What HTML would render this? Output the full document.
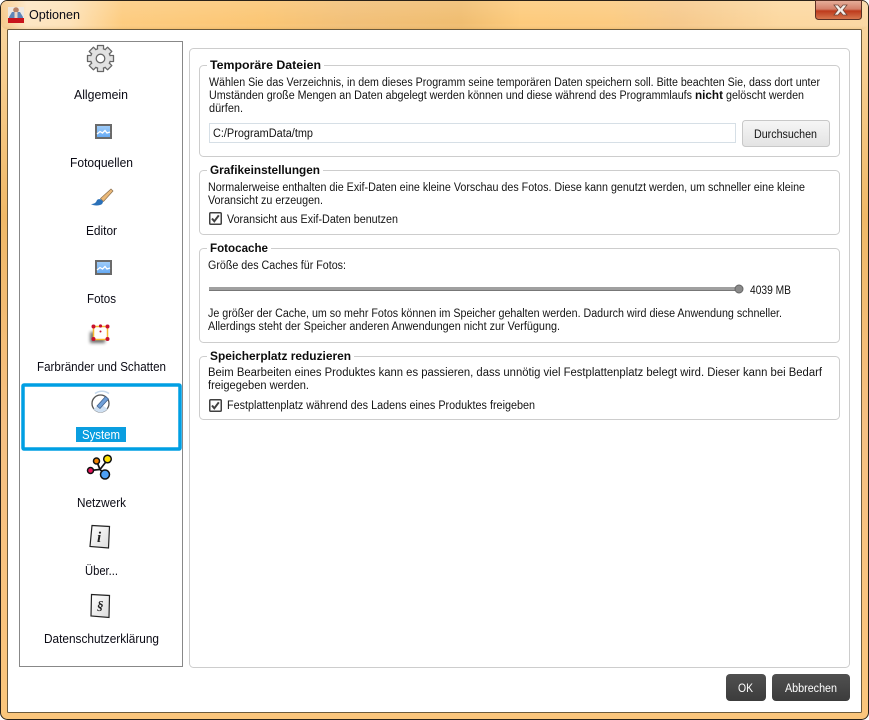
<!DOCTYPE html>
<html lang="de"><head><meta charset="utf-8"><title>Optionen</title>
<style>
html,body{margin:0;padding:0;width:869px;height:720px;overflow:hidden;background:#fff}
svg{display:block;position:absolute;left:0;top:0}
text{font-family:"Liberation Sans",sans-serif;font-size:11.500px;fill:#141414}
.l{font-size:12.500px;fill:#0a0a14}
.b{font-weight:bold;fill:#0c0c0c;font-size:11.500px}
</style></head><body>
<svg width="869" height="720" viewBox="0 0 869 720" xmlns="http://www.w3.org/2000/svg">
<defs>
<linearGradient id="tb" x1="0" x2="1" y1="0" y2="0">
<stop offset="0" stop-color="#f6c98a"/><stop offset=".03" stop-color="#fde6c4"/><stop offset=".08" stop-color="#fde2b8"/><stop offset=".14" stop-color="#fdcc80"/><stop offset=".3" stop-color="#fbc674"/><stop offset=".4" stop-color="#f2c078"/><stop offset=".53" stop-color="#f0bd70"/><stop offset=".6" stop-color="#fdcb7c"/><stop offset=".7" stop-color="#fccb80"/><stop offset=".78" stop-color="#f6c98c"/><stop offset=".9" stop-color="#fcd8a0"/><stop offset="1" stop-color="#fbd8a4"/>
</linearGradient>
<linearGradient id="tv" x1="0" x2="0" y1="0" y2="1"><stop offset="0" stop-color="#fff" stop-opacity=".12"/><stop offset=".8" stop-color="#fff" stop-opacity="0"/><stop offset="1" stop-color="#c98a30" stop-opacity=".18"/></linearGradient>
<linearGradient id="side" x1="0" x2="0" y1="0" y2="1"><stop offset="0" stop-color="#fbd9a4"/><stop offset=".3" stop-color="#f0b968"/><stop offset=".6" stop-color="#f6c183"/><stop offset="1" stop-color="#fbc67c"/></linearGradient>
<linearGradient id="close" x1="0" x2="0" y1="0" y2="1"><stop offset="0" stop-color="#e6b09c"/><stop offset=".45" stop-color="#d4806a"/><stop offset=".55" stop-color="#bd3a1c"/><stop offset="1" stop-color="#d87a50"/></linearGradient>
<linearGradient id="btn" x1="0" x2="0" y1="0" y2="1"><stop offset="0" stop-color="#f6f6f6"/><stop offset="1" stop-color="#e3e3e3"/></linearGradient>
<linearGradient id="dark" x1="0" x2="0" y1="0" y2="1"><stop offset="0" stop-color="#505050"/><stop offset="1" stop-color="#3c3c3c"/></linearGradient>
<linearGradient id="pic" x1="0" x2="0" y1="0" y2="1"><stop offset="0" stop-color="#a4cef8"/><stop offset="1" stop-color="#62a8f4"/></linearGradient>
<linearGradient id="page" x1="0" x2="1" y1="0" y2="1"><stop offset="0" stop-color="#fff"/><stop offset="1" stop-color="#dcdcdc"/></linearGradient>
<filter id="sh" x="-50%" y="-50%" width="200%" height="200%"><feGaussianBlur stdDeviation="1.600"/></filter>
</defs>

<!-- window frame -->
<rect x=".5" y=".5" width="868" height="719" rx="7" fill="url(#side)" stroke="#2a2218"/>
<rect x="1" y="1" width="867" height="28" rx="6" fill="url(#tb)"/>
<rect x="1" y="1" width="867" height="28" rx="6" fill="url(#tv)"/>
<rect x="7.500" y="29.500" width="854" height="683" rx="1" fill="#fff" stroke="#6b5a3c"/>

<!-- title icon -->
<rect x="8" y="7" width="16" height="16" fill="#eee8e2"/>
<path d="M9 17l3-5h8l3 5v1H9z" fill="#5f86b8"/>
<circle cx="16" cy="10" r="2.800" fill="#b88064"/>
<rect x="14.500" y="12" width="3" height="6" fill="#e8d4c4"/>
<rect x="8" y="18" width="16" height="5" fill="#c8141c"/>
<text x="29" y="19" class="l" textLength="51" lengthAdjust="spacingAndGlyphs">Optionen</text>

<!-- close button -->
<path d="M815.500 0.500h46v16a3 3 0 0 1-3 3h-40a3 3 0 0 1-3-3z" fill="url(#close)" stroke="#5a3024"/>
<path d="M834 5h4l2.500 3 2.500-3h4l-4 5 4 5h-4l-2.500-3-2.500 3h-4l4-5z" fill="#f4f0ec" stroke="#70473a" stroke-width=".8"/>

<!-- left panel -->
<rect x="19.500" y="41.500" width="163" height="625" fill="#fff" stroke="#888"/>
<rect x="23" y="385" width="157" height="64" rx="1" fill="#fff" stroke="#009fe3" stroke-width="3.500"/>
<rect x="76" y="427" width="50" height="15" fill="#0a9ee0"/>

<!-- gear -->
<g transform="translate(100.500 58.500)">
<g fill="#e2e2e2" stroke="#666" stroke-width="1.300" stroke-linejoin="round">
<rect x="-3" y="-13" width="6" height="6"/>
<rect x="-3" y="-13" width="6" height="6" transform="rotate(45)"/>
<rect x="-3" y="-13" width="6" height="6" transform="rotate(90)"/>
<rect x="-3" y="-13" width="6" height="6" transform="rotate(135)"/>
<rect x="-3" y="-13" width="6" height="6" transform="rotate(180)"/>
<rect x="-3" y="-13" width="6" height="6" transform="rotate(225)"/>
<rect x="-3" y="-13" width="6" height="6" transform="rotate(270)"/>
<rect x="-3" y="-13" width="6" height="6" transform="rotate(315)"/>
<circle r="10"/>
</g>
<g fill="#e2e2e2">
<rect x="-2.300" y="-12" width="4.600" height="5"/>
<rect x="-2.300" y="-12" width="4.600" height="5" transform="rotate(45)"/>
<rect x="-2.300" y="-12" width="4.600" height="5" transform="rotate(90)"/>
<rect x="-2.300" y="-12" width="4.600" height="5" transform="rotate(135)"/>
<rect x="-2.300" y="-12" width="4.600" height="5" transform="rotate(180)"/>
<rect x="-2.300" y="-12" width="4.600" height="5" transform="rotate(225)"/>
<rect x="-2.300" y="-12" width="4.600" height="5" transform="rotate(270)"/>
<rect x="-2.300" y="-12" width="4.600" height="5" transform="rotate(315)"/>
</g>
<circle r="4.300" fill="#fff" stroke="#666" stroke-width="1.300"/>
</g>
<text x="74" y="99" class="l" textLength="54" lengthAdjust="spacingAndGlyphs">Allgemein</text>

<!-- photo -->
<rect x="96" y="125" width="15" height="13" fill="url(#pic)" stroke="#6a6a6a" stroke-width="2"/>
<path d="M97 134l3-2.500 2.500 1.500 2.500-2.500 2 2.500 3-1" fill="none" stroke="#fff" stroke-width="1.300"/>
<text x="70" y="167" class="l" textLength="63" lengthAdjust="spacingAndGlyphs">Fotoquellen</text>

<!-- brush -->
<path d="M100.500 198.500l10.500-9.500 2 2-9.500 10.500z" fill="#eab878" stroke="#8a7050" stroke-width=".7"/>
<path d="M91 204c3 0 5-1 6-4 1-1 3-1 4-.5l2 2c0 1.500-1 3-3 3.500-3 1-7 .5-9-1z" fill="#2a70b8"/>
<text x="86" y="235" class="l" textLength="31" lengthAdjust="spacingAndGlyphs">Editor</text>

<!-- photo 2 -->
<rect x="96" y="261" width="15" height="13" fill="url(#pic)" stroke="#6a6a6a" stroke-width="2"/>
<path d="M97 270l3-2.500 2.500 1.500 2.500-2.500 2 2.500 3-1" fill="none" stroke="#fff" stroke-width="1.300"/>
<text x="87" y="303" class="l" textLength="29" lengthAdjust="spacingAndGlyphs">Fotos</text>

<!-- border icon -->
<rect x="90" y="332" width="15" height="11" fill="#333" opacity=".7" filter="url(#sh)"/>
<rect x="93.500" y="326.500" width="14" height="13" fill="#fff" stroke="#f8b830" stroke-width="1.500"/>
<g fill="#c8102e"><circle cx="93.500" cy="326.500" r="2"/><circle cx="100.500" cy="326" r="1.600"/><circle cx="107.500" cy="326.500" r="2"/><circle cx="93.500" cy="339" r="2"/><circle cx="107.500" cy="339" r="2"/><circle cx="100.500" cy="331.500" r="1"/></g>
<text x="37" y="371" class="l" textLength="129" lengthAdjust="spacingAndGlyphs">Farbränder und Schatten</text>

<!-- system -->
<path d="M95 393.500a12 12 0 0 1 14 0" fill="none" stroke="#c4d8ec" stroke-width="1.500"/>
<circle cx="100.500" cy="403.500" r="8.500" fill="#fff" stroke="#555" stroke-width="1.300"/>
<path d="M93.500 409a9 9 0 0 0 14 0l-4-3h-6z" fill="#cfe0f2"/>
<path d="M97 406l8.500-9.500 3 2.500-8.500 9.500z" fill="#6f9fd8" stroke="#40608c" stroke-width=".8"/>
<text x="82" y="439" class="l" textLength="38" lengthAdjust="spacingAndGlyphs" style="fill:#fff">System</text>

<!-- network -->
<path d="M90 470.500l10-1 7-9M97 462l3 7.500 5 5" fill="none" stroke="#111" stroke-width="1.700"/>
<circle cx="96.500" cy="461" r="3" fill="#f08000" stroke="#111" stroke-width="1.500"/>
<circle cx="107.500" cy="459" r="3.800" fill="#ffe000" stroke="#111" stroke-width="1.500"/>
<circle cx="90.500" cy="470.500" r="3" fill="#e8105a" stroke="#111" stroke-width="1.500"/>
<circle cx="105" cy="474.500" r="4.500" fill="#4da0f5" stroke="#111" stroke-width="1.500"/>
<text x="77" y="507" class="l" textLength="49" lengthAdjust="spacingAndGlyphs">Netzwerk</text>

<!-- info page -->
<path d="M92 525.500l17.500 1-1 21.500-18.500-1.500z" fill="url(#page)" stroke="#222" stroke-width="1.200"/>
<text x="97" y="542" style="font-family:'Liberation Serif',serif;font-style:italic;font-weight:bold;font-size:15px;fill:#222">i</text>
<text x="85" y="575" class="l" textLength="33" lengthAdjust="spacingAndGlyphs">Über...</text>

<!-- paragraph page -->
<path d="M91.500 594.500l18 1-.5 22-18-1.500z" fill="url(#page)" stroke="#222" stroke-width="1.200"/>
<text x="97" y="610" style="font-family:'Liberation Serif',serif;font-style:italic;font-weight:bold;font-size:13px;fill:#222">§</text>
<text x="44" y="643" class="l" textLength="115" lengthAdjust="spacingAndGlyphs">Datenschutzerklärung</text>

<!-- main panel -->
<rect x="189.500" y="48.500" width="660" height="619" rx="4" fill="#fff" stroke="#cdcdcd"/>

<!-- group 1 -->
<rect x="199.500" y="65.500" width="640" height="91" rx="4" fill="#fff" stroke="#cdcdcd"/>
<rect x="207" y="60" width="117" height="10" fill="#fff"/>
<text x="210" y="69" class="b" textLength="111" lengthAdjust="spacingAndGlyphs">Temporäre Dateien</text>
<text x="209" y="86" textLength="611" lengthAdjust="spacingAndGlyphs">Wählen Sie das Verzeichnis, in dem dieses Programm seine temporären Daten speichern soll. Bitte beachten Sie, dass dort unter</text>
<text x="209" y="99" textLength="483" lengthAdjust="spacingAndGlyphs">Umständen große Mengen an Daten abgelegt werden können und diese während des Programmlaufs</text>
<text x="695" y="99" class="b" textLength="28" lengthAdjust="spacingAndGlyphs">nicht</text>
<text x="726" y="99" textLength="78" lengthAdjust="spacingAndGlyphs">gelöscht werden</text>
<text x="209" y="112" textLength="34" lengthAdjust="spacingAndGlyphs">dürfen.</text>
<rect x="209.500" y="123.500" width="526" height="19" fill="#fff" stroke="#d6dfe6"/>
<text x="213" y="137" textLength="100" lengthAdjust="spacingAndGlyphs">C:/ProgramData/tmp</text>
<rect x="742.500" y="120.500" width="87" height="26" rx="3" fill="url(#btn)" stroke="#c8c8c8"/>
<text x="754" y="138" textLength="63" lengthAdjust="spacingAndGlyphs">Durchsuchen</text>

<!-- group 2 -->
<rect x="199.500" y="170.500" width="640" height="64" rx="4" fill="#fff" stroke="#cdcdcd"/>
<rect x="207" y="165" width="116" height="10" fill="#fff"/>
<text x="210" y="174" class="b" textLength="110" lengthAdjust="spacingAndGlyphs">Grafikeinstellungen</text>
<text x="208" y="191" textLength="597" lengthAdjust="spacingAndGlyphs">Normalerweise enthalten die Exif-Daten eine kleine Vorschau des Fotos. Diese kann genutzt werden, um schneller eine kleine</text>
<text x="208" y="204" textLength="115" lengthAdjust="spacingAndGlyphs">Voransicht zu erzeugen.</text>
<rect x="209.750" y="212.750" width="11.500" height="11.500" rx="1" fill="#fff" stroke="#404040" stroke-width="1.500"/>
<path d="M212 218.500l2.300 2.800 4.500-6" fill="none" stroke="#404040" stroke-width="2"/>
<text x="227" y="223" textLength="171" lengthAdjust="spacingAndGlyphs">Voransicht aus Exif-Daten benutzen</text>

<!-- group 3 -->
<rect x="199.500" y="248.500" width="640" height="94" rx="4" fill="#fff" stroke="#cdcdcd"/>
<rect x="207" y="243" width="64" height="10" fill="#fff"/>
<text x="210" y="252" class="b" textLength="58" lengthAdjust="spacingAndGlyphs">Fotocache</text>
<text x="208" y="269" textLength="138" lengthAdjust="spacingAndGlyphs">Größe des Caches für Fotos:</text>
<rect x="209" y="287" width="530" height="4" fill="#a0a0a0"/>
<rect x="209" y="290" width="530" height="1" fill="#777"/>
<circle cx="739" cy="289" r="4" fill="#8a8a8a" stroke="#666"/>
<text x="750" y="294" textLength="41" lengthAdjust="spacingAndGlyphs">4039 MB</text>
<text x="208" y="317" textLength="574" lengthAdjust="spacingAndGlyphs">Je größer der Cache, um so mehr Fotos können im Speicher gehalten werden. Dadurch wird diese Anwendung schneller.</text>
<text x="208" y="330" textLength="352" lengthAdjust="spacingAndGlyphs">Allerdings steht der Speicher anderen Anwendungen nicht zur Verfügung.</text>

<!-- group 4 -->
<rect x="199.500" y="356.500" width="640" height="63" rx="4" fill="#fff" stroke="#cdcdcd"/>
<rect x="207" y="351" width="147" height="10" fill="#fff"/>
<text x="210" y="360" class="b" textLength="141" lengthAdjust="spacingAndGlyphs">Speicherplatz reduzieren</text>
<text x="208" y="376" textLength="614" lengthAdjust="spacingAndGlyphs">Beim Bearbeiten eines Produktes kann es passieren, dass unnötig viel Festplattenplatz belegt wird. Dieser kann bei Bedarf</text>
<text x="208" y="389" textLength="101" lengthAdjust="spacingAndGlyphs">freigegeben werden.</text>
<rect x="209.750" y="399.750" width="11.500" height="11.500" rx="1" fill="#fff" stroke="#404040" stroke-width="1.500"/>
<path d="M212 405.500l2.300 2.800 4.500-6" fill="none" stroke="#404040" stroke-width="2"/>
<text x="227" y="409" textLength="308" lengthAdjust="spacingAndGlyphs">Festplattenplatz während des Ladens eines Produktes freigeben</text>

<!-- footer buttons -->
<rect x="726" y="674" width="40" height="27" rx="4" fill="url(#dark)"/>
<text x="738" y="692" textLength="15" lengthAdjust="spacingAndGlyphs" style="fill:#fff">OK</text>
<rect x="772" y="674" width="78" height="27" rx="4" fill="url(#dark)"/>
<text x="785" y="692" textLength="52" lengthAdjust="spacingAndGlyphs" style="fill:#fff">Abbrechen</text>
</svg>
</body></html>
